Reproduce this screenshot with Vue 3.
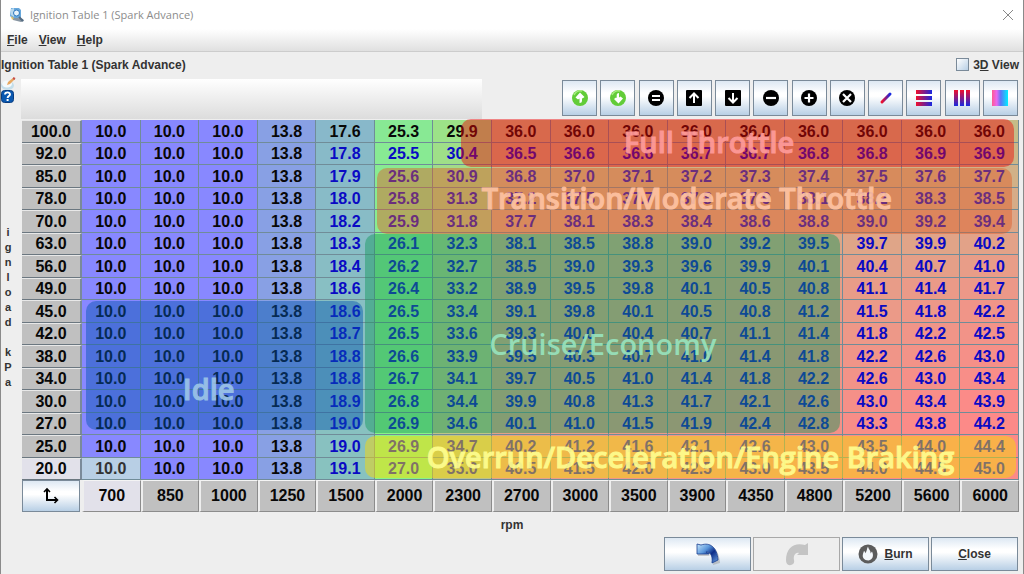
<script setup>
const rpm = [700, 850, 1000, 1250, 1500, 2000, 2300, 2700, 3000, 3500, 3900, 4350, 4800, 5200, 5600, 6000]

const rows = [
  ['100.0', '17.6 25.3 29.9 36.0 36.0 36.0 36.0 36.0 36.0 36.0 36.0 36.0'],
  ['92.0', '17.8 25.5 30.4 36.5 36.6 36.6 36.7 36.7 36.8 36.8 36.9 36.9'],
  ['85.0', '17.9 25.6 30.9 36.8 37.0 37.1 37.2 37.3 37.4 37.5 37.6 37.7'],
  ['78.0', '18.0 25.8 31.3 37.2 37.5 37.7 37.8 37.9 38.1 38.2 38.3 38.5'],
  ['70.0', '18.2 25.9 31.8 37.7 38.1 38.3 38.4 38.6 38.8 39.0 39.2 39.4'],
  ['63.0', '18.3 26.1 32.3 38.1 38.5 38.8 39.0 39.2 39.5 39.7 39.9 40.2'],
  ['56.0', '18.4 26.2 32.7 38.5 39.0 39.3 39.6 39.9 40.1 40.4 40.7 41.0'],
  ['49.0', '18.6 26.4 33.2 38.9 39.5 39.8 40.1 40.5 40.8 41.1 41.4 41.7'],
  ['45.0', '18.6 26.5 33.4 39.1 39.8 40.1 40.5 40.8 41.2 41.5 41.8 42.2'],
  ['42.0', '18.7 26.5 33.6 39.3 40.0 40.4 40.7 41.1 41.4 41.8 42.2 42.5'],
  ['38.0', '18.8 26.6 33.9 39.5 40.3 40.7 41.0 41.4 41.8 42.2 42.6 43.0'],
  ['34.0', '18.8 26.7 34.1 39.7 40.5 41.0 41.4 41.8 42.2 42.6 43.0 43.4'],
  ['30.0', '18.9 26.8 34.4 39.9 40.8 41.3 41.7 42.1 42.6 43.0 43.4 43.9'],
  ['27.0', '19.0 26.9 34.6 40.1 41.0 41.5 41.9 42.4 42.8 43.3 43.8 44.2'],
  ['25.0', '19.0 26.9 34.7 40.2 41.2 41.6 42.1 42.6 43.0 43.5 44.0 44.4'],
  ['20.0', '19.1 27.0 35.0 40.5 41.5 42.0 42.5 43.0 43.5 44.0 44.5 45.0'],
].map(([load, tail]) => ({ load, cells: ['10.0', '10.0', '10.0', '13.8', ...tail.split(' ')] }))

function heat(value) {
  const v = Number(value)
  const lo = 136
  if (v <= 27) {
    const t = (v - 10) / 17
    return `rgb(${lo}, ${Math.round(lo + 108 * t)}, ${Math.round(255 - 119 * t)})`
  }
  const t = Math.min(1, (v - 27) / 17)
  return `rgb(${Math.round(lo + 116 * t)}, ${Math.round(244 - 106 * t)}, ${lo})`
}

const zones = [
  { id: 'full', text: 'Full Throttle' },
  { id: 'transition', text: 'Transition/Moderate Throttle' },
  { id: 'cruise', text: 'Cruise/Economy' },
  { id: 'idle', text: 'Idle' },
  { id: 'overrun', text: 'Overrun/Deceleration/Engine Braking' },
]

const tools = [
  'Increase all', 'Decrease all', 'Set equal', 'Increment', 'Decrement', 'Subtract',
  'Add', 'Multiply', 'Interpolate', 'Interpolate rows', 'Interpolate columns', 'Smooth',
]
const axisLetters = [...'ignload kPa']
</script>

<template>
  <div class="window">
    <svg class="defs" aria-hidden="true">
      <defs>
        <linearGradient id="rb" x1="0" x2="1" y1="0" y2="0"><stop offset="0" stop-color="#f0102c" /><stop offset="1" stop-color="#1828e0" /></linearGradient>
        <linearGradient id="rbv" x1="0" x2="0" y1="0" y2="1"><stop offset="0" stop-color="#f0102c" /><stop offset="1" stop-color="#1828e0" /></linearGradient>
        <linearGradient id="smooth" x1="0" x2="1" y1="0" y2="0"><stop offset="0" stop-color="#ff5a92" /><stop offset=".3" stop-color="#e868f0" /><stop offset=".55" stop-color="#5a78f8" /><stop offset="1" stop-color="#00f0ff" /></linearGradient>
        <linearGradient id="undo" x1="0" x2="1" y1="0" y2="1"><stop offset="0" stop-color="#c8e8fc" /><stop offset=".35" stop-color="#5c98dc" /><stop offset=".6" stop-color="#0c2c88" /><stop offset="1" stop-color="#6ca4e4" /></linearGradient>
      </defs>
    </svg>

    <header class="titlebar">
      <svg width="16" height="16" viewBox="0 0 16 16">
        <path d="M2 1h8l2 2v8H3L1 9z" fill="#68a8dc" />
        <path d="M2 2l3-1v9l-3-2z" fill="#b8d8ee" />
        <circle cx="7.500" cy="6" r="3" fill="#e8f3fa" stroke="#2d78bd" />
        <path d="M4 11h5l5 1 1 2-3 1-8-2z" fill="#8795a2" />
        <path d="M2 9l3 2-2 2z" fill="#e3c466" />
        <path d="M10 10l4 4" stroke="#536b82" stroke-width="2" />
      </svg>
      <span class="title">Ignition Table 1 (Spark Advance)</span>
      <button class="close-x" aria-label="Close window">
        <svg width="12" height="12" viewBox="0 0 12 12"><path d="M1 1l10 10M11 1L1 11" stroke="#888" stroke-width="1" /></svg>
      </button>
    </header>

    <nav class="menubar">
      <button><u>F</u>ile</button>
      <button><u>V</u>iew</button>
      <button><u>H</u>elp</button>
    </nav>

    <div class="heading">
      <h1>Ignition Table 1 (Spark Advance)</h1>
      <label class="view3d"><input type="checkbox" /><span>3<u>D</u> View</span></label>
    </div>

    <main class="editor">
      <aside class="side">
        <svg width="15" height="13" viewBox="0 0 15 13">
          <ellipse cx="6.500" cy="8.500" rx="6.500" ry="4.500" fill="#c4deea" />
          <ellipse cx="6" cy="7" rx="5" ry="3.500" fill="#f4fafc" />
          <path d="M6 8l1-3 5-4 2 1-5 5z" fill="#e8a860" />
          <path d="M12 1l2 1" stroke="#c85048" stroke-width="2" />
        </svg>
        <svg width="13" height="13" viewBox="0 0 13 13">
          <rect x=".5" y=".5" width="12" height="12" rx="3" fill="#0a58b0" stroke="#083c80" />
          <path d="M4 4.500C4 1.600 9.200 1.800 9 4.500 9 6 6.600 6.200 6.600 8" fill="none" stroke="#fff" stroke-width="1.900" />
          <rect x="5.600" y="9" width="2" height="2" fill="#fff" />
        </svg>
        <div class="yaxis"><span v-for="(c, i) in axisLetters" :key="i">{{ c }}</span></div>
      </aside>

      <section class="panel">
        <div class="toolbar">
          <div class="strip"></div>
          <div class="tools">
            <button v-for="(name, i) in tools" :key="name" :aria-label="name">
              <svg width="18" height="18" viewBox="0 0 18 18">
                <g v-if="i < 2">
                  <circle cx="9" cy="9" r="8" fill="#62cc38" />
                  <path d="M3 6a7 7 0 0 1 8-4" stroke="#a8ec80" stroke-width="1.500" fill="none" />
                  <path v-if="i === 0" d="M9 3.500l4.500 4.500-2 1.500-.5-.5v2.500q0 2.500-2.500 2.500V9.500L7 10.500 4.500 8.500z" fill="#fff" />
                  <path v-else d="M9.500 14.500L5 10l2-1.500.7.500V6.500Q7.500 4 10 4v4.500l1.500-1L14 9.500z" fill="#fff" />
                </g>
                <g v-else-if="i === 3 || i === 4" stroke="#fff" stroke-width="2" fill="none">
                  <rect x="1" y="1" width="16" height="16" rx="1" fill="#000" stroke="none" />
                  <path v-if="i === 3" d="M9 14V5M4.500 9L9 4.500 13.500 9" />
                  <path v-else d="M9 4v9M4.500 9L9 13.500 13.500 9" />
                </g>
                <g v-else-if="i < 8" stroke="#fff" stroke-width="2.200">
                  <circle cx="9" cy="9" r="8" fill="#000" stroke="none" />
                  <path v-if="i === 2" d="M5 7h8M5 11h8" stroke-width="1.800" />
                  <path v-if="i === 5" d="M4 9h10" />
                  <path v-if="i === 6" d="M4.500 9h9M9 4.500v9" />
                  <path v-if="i === 7" d="M5 5l8 8M13 5l-8 8" />
                </g>
                <path v-else-if="i === 8" d="M5 13L13 5" stroke="url(#rb)" stroke-width="3" stroke-linecap="round" />
                <path v-else-if="i === 9" d="M1 1h16v4H1zM1 7h16v4H1zM1 13h16v4H1z" fill="url(#rb)" />
                <path v-else-if="i === 10" d="M1 1h4v16H1zM7 1h4v16H7zM13 1h4v16h-4z" fill="url(#rbv)" />
                <rect v-else x="1" y="1" width="16" height="16" fill="url(#smooth)" />
              </svg>
            </button>
          </div>
        </div>

        <div class="map">
          <table>
            <tbody>
              <tr v-for="(row, r) in rows" :key="row.load">
                <th scope="row" :class="{ active: r === 15 }">{{ row.load }}</th>
                <td
                  v-for="(v, c) in row.cells"
                  :key="c"
                  :class="{ blue: c > 3 && r > 0, selected: r === 15 && c === 0 }"
                  :style="{ backgroundColor: heat(v) }"
                >{{ v }}</td>
              </tr>
            </tbody>
            <tfoot>
              <tr>
                <td class="corner">
                  <button aria-label="Swap axes">
                    <svg width="18" height="18" viewBox="0 0 18 18" fill="none" stroke="#000" stroke-width="2"><path d="M5 3v10h10" /><path d="M2 5l3-3 3 3M12.500 10l3 3-3 3" stroke-width="1.600" /></svg>
                  </button>
                </td>
                <th v-for="(n, c) in rpm" :key="n" scope="col" :class="{ active: c === 0 }">{{ n }}</th>
              </tr>
            </tfoot>
          </table>
          <div v-for="z in zones" :key="z.id" class="zone" :class="z.id"><span>{{ z.text }}</span></div>
        </div>
      </section>
    </main>

    <div class="xaxis">rpm</div>

    <footer class="actions">
      <button aria-label="Undo">
        <svg width="24" height="24" viewBox="0 0 24 24">
          <path d="M2 3h5c9-2 16 4 17 18l-7 2c1-7-1-11-6-11l3 2H2z" fill="#999" opacity=".5" />
          <path d="M1 2l4 1c9-3 16 2 17 15l-6 3c1-8-2-11-6-11l3 2H1z" fill="url(#undo)" stroke="#173c90" stroke-width=".8" />
        </svg>
      </button>
      <button disabled aria-label="Redo">
        <svg width="24" height="24" viewBox="0 0 24 24"><path d="M23 1l-3 2C10 0 1 5 1 18q0 6 5 5 4-1 3-5c-1-5 2-8 5-7l-2 2h11z" fill="#c4c4c4" /></svg>
      </button>
      <button>
        <svg width="20" height="20" viewBox="0 0 20 20">
          <circle cx="10" cy="10" r="9.500" fill="#5c5c5c" />
          <path d="M10 2.500c.5 3 3 4 2.500 7l1.500-2c2 4 1 8-3.500 9C6 16.500 4 13.500 5 10c.3-1.500.8-2 1-3.200.8.700 1 1.600 1.200 2.500C9 7.500 8.600 5 10 2.500z" fill="#f4f8fc" />
        </svg>
        <span><u>B</u>urn</span>
      </button>
      <button><span><u>C</u>lose</span></button>
    </footer>
  </div>
</template>

<style>
body { margin: 0; background: #eee; }
</style>

<style scoped>
* { box-sizing: border-box; }
.window {
  min-height: 100vh;
  display: flex;
  flex-direction: column;
  background: #eee;
  border-left: 1px solid #8a8a8a;
  border-right: 1px solid #8a8a8a;
  font: bold 12px/16px "Liberation Sans", Arial, sans-serif;
  color: #333;
}
.defs { position: absolute; width: 0; height: 0; }
button { font: inherit; color: inherit; margin: 0; padding: 0; }
.titlebar {
  height: 29px;
  display: flex;
  align-items: center;
  gap: 5px;
  padding: 0 9px 0 8px;
  background: #fff;
}
.title { flex: 1; font: 11px/16px "Open Sans", "Noto Sans", sans-serif; color: #8c8c8c; }
.close-x { border: 0; background: none; display: flex; }
.menubar {
  height: 23px;
  display: flex;
  align-items: center;
  gap: 11px;
  padding: 0 6px;
  background: linear-gradient(#fff, #e0e0e0);
  border-bottom: 1px solid #ccc;
}
.menubar button { border: 0; background: none; }
.heading {
  height: 25px;
  display: flex;
  align-items: center;
  justify-content: space-between;
  padding-right: 4px;
}
h1 { margin: 0; font-size: 12px; line-height: 16px; }
.view3d { display: flex; align-items: center; gap: 4px; }
.view3d input {
  appearance: none;
  width: 13px;
  height: 13px;
  margin: 0;
  border: 1px solid #7a8a99;
  background: linear-gradient(135deg, #fff, #b8cfe5);
}
.editor { display: flex; }
.side { width: 20px; display: flex; flex-direction: column; align-items: flex-start; }
.yaxis {
  width: 14px;
  margin-top: 122px;
  display: flex;
  flex-direction: column;
  align-items: center;
  font-size: 11px;
}
.yaxis span { height: 15px; line-height: 15px; }
.panel { flex: 1; min-width: 0; }
.toolbar { display: flex; justify-content: space-between; padding-top: 2px; height: 43px; }
.strip { width: 46%; height: 40px; background: linear-gradient(#fff, #dcdcdc); }
.tools { width: 46%; display: flex; justify-content: space-between; padding: 1px 5px 0 0; }
.tools button {
  width: 35px;
  height: 36px;
  display: grid;
  place-items: center;
}
.tools button, .actions button, .corner button {
  border: 1px solid #7a8a99;
  background: linear-gradient(#dde8f3, #fff 35%, #fff 45%, #b8cfe5);
}
.map { position: relative; margin: 0 4px 0 1px; }
table {
  width: 100%;
  height: 392px;
  table-layout: fixed;
  border-collapse: separate;
  border-spacing: 0;
  color: #080808;
  font-size: 16px;
  line-height: 18px;
  text-align: center;
}
td, th { padding: 0; }
tbody td { padding-top: 2px; border-right: 1px solid #708c98; border-bottom: 1px solid #708c98; }
tbody th {
  width: 60px;
  padding-top: 1px;
  background: #c0c0c0;
  background-clip: padding-box;
  border-bottom: 1px solid #6b7780;
  border-top: 1px solid #e8e8e8;
  border-right: 2px solid #7a8a99;
}
tbody th.active, tfoot th.active { background-color: #e2e1ea; }
td.blue { color: #0a0ac4; }
td.selected { background-color: #b8cfe5 !important; color: #333; }
tfoot tr { height: 32px; }
tfoot th {
  background: #c0c0c0;
  border: 1px solid #8c8c8c;
  border-left: 2px solid #eee;
  border-top: 1px solid #f4f4f4;
}
.corner { padding-right: 2px; }
.corner button { width: 100%; height: 32px; display: grid; place-items: center; }
.zone {
  position: absolute;
  border-radius: 10px;
  font: 600 29px/32px "Open Sans", "Noto Sans", sans-serif;
  white-space: nowrap;
}
.zone span { position: absolute; opacity: .9; -webkit-text-stroke: 1px currentColor; }
.full { left: 44%; right: 0.5%; top: -1px; height: 48px; background: rgba(240, 5, 5, .45); color: #ff9c9c; }
.full span { left: 29.500%; top: 7px; }
.transition { left: 35.600%; right: 0.700%; top: 48px; height: 66px; background: rgba(225, 90, 40, .45); color: #ffc4a4; }
.transition span { left: 16.500%; top: 14px; }
.cruise { left: 34.400%; right: 18%; top: 114px; height: 199px; background: rgba(20, 150, 90, .45); color: #98e4be; }
.cruise span { left: 26.200%; top: 94px; -webkit-text-stroke-width: 0; }
.idle { left: 6.400%; right: 65.800%; top: 181px; height: 129px; background: rgba(5, 85, 175, .45); color: #9ec6e8; }
.idle span { left: 35%; top: 72px; }
.overrun { left: 34.400%; right: 0.300%; top: 316px; height: 42px; background: rgba(245, 215, 10, .5); color: #ffff90; }
.overrun span { left: 9.500%; top: 5px; }
.xaxis { padding-top: 5px; text-align: center; }
.actions { display: flex; justify-content: flex-end; gap: 2px; padding: 4px 5px 0 0; }
.actions button {
  width: 87px;
  height: 34px;
  display: flex;
  align-items: center;
  justify-content: center;
  gap: 6px;
}
.actions button:disabled { background: #eee; border-color: #a8a8a8; }
</style>
